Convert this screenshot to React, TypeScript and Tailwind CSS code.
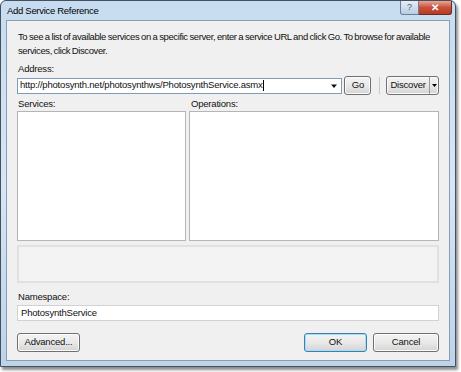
const font = { fontFamily: '"Liberation Sans", Arial, sans-serif' };

const Btn = ({ label, className = "", primary = false }: { label: string; className?: string; primary?: boolean }) => (
  <div
    className={`h-[19px] flex items-center justify-center rounded-[3px] border text-[9.5px] text-[#111] bg-gradient-to-b from-[#f4f4f4] via-[#e9e9e9] to-[#d4d4d4] ${
      primary ? "border-[#3c7fb1] shadow-[inset_0_0_0_1px_#a6dcf5]" : "border-[#707070] shadow-[inset_0_0_0_1px_#fbfbfb]"
    } ${className}`}
  >
    {label}
  </div>
);

const Caret = () => (
  <svg width="6" height="4" viewBox="0 0 6 4">
    <path d="M0 0.5h6L3 4z" fill="#111" />
  </svg>
);

export default function App() {
  return (
    <div className="w-[461px] h-[372px] bg-white overflow-hidden" style={font}>
      <div className="w-[456px] h-[367px] rounded-t-[6px] border border-[#44505e] bg-gradient-to-b from-[#c7dcf0] via-[#d6e6f5] to-[#bcd3ea] shadow-[2px_3px_3px_rgba(0,0,0,0.45)] flex flex-col">
        {/* Title bar */}
        <div className="h-[19px] flex items-start justify-between pl-[6px] pr-[3px]">
          <span className="text-[9.5px] tracking-[-0.3px] text-black mt-[3px] leading-[14px]">Add Service Reference</span>
          <div className="flex">
            <div className="w-[19px] h-[14px] rounded-bl-[3px] border border-[#6d7f94] border-t-0 bg-gradient-to-b from-[#e3edf8] to-[#b9cde3] flex items-center justify-center text-[9px] text-[#555] leading-none">
              ?
            </div>
            <div className="w-[33px] h-[14px] rounded-br-[3px] border border-[#6b2a22] border-t-0 border-l-0 bg-gradient-to-b from-[#e8a595] via-[#c8503a] to-[#b83a22] flex items-center justify-center text-[10px] font-bold text-white leading-none">
              ✕
            </div>
          </div>
        </div>

        {/* Client area */}
        <div className="mx-[5px] mb-[5px] flex-1 border border-[#8a9db3] bg-[#f0f0f0] px-[10px] pt-[9px] flex flex-col text-[9.5px] tracking-[-0.2px] text-[#111]">
          <p className="leading-[14px] pl-px tracking-[-0.4px] [word-spacing:-0.5px]">
            To see a list of available services on a specific server, enter a service URL and click Go. To browse for available services, click Discover.
          </p>

          <div className="mt-[4px] leading-[14px] pl-px">Address:</div>
          <div className="flex items-center">
            <div className="w-[327px] h-[16px] border border-[#7f9db9] bg-white flex items-center pl-[2px] pr-[4px] justify-between">
              <span className="leading-none">
                http://photosynth.net/photosynthws/PhotosynthService.asmx<span className="inline-block w-px h-[11px] bg-black align-middle" />
              </span>
              <Caret />
            </div>
            <Btn label="Go" className="w-[27px] ml-[2px]" />
            <div className="w-px h-[17px] bg-[#c9c9c9] ml-[8px] mr-[6px]" />
            <div className="h-[19px] w-[53px] flex rounded-[3px] border border-[#707070] bg-gradient-to-b from-[#f4f4f4] via-[#e9e9e9] to-[#d4d4d4] shadow-[inset_0_0_0_1px_#fbfbfb]">
              <div className="flex-1 flex items-center justify-center">Discover</div>
              <div className="w-[9px] border-l border-[#9a9a9a] flex items-center justify-center">
                <svg width="5" height="3" viewBox="0 0 5 3">
                  <path d="M0 0h5L2.5 3z" fill="#000" />
                </svg>
              </div>
            </div>
          </div>

          <div className="mt-[2px] flex gap-[3px]">
            <div className="w-[169px] flex flex-col">
              <div className="leading-[14px] pl-px">Services:</div>
              <div className="h-[130px] border border-[#b5b5b5] bg-white" />
            </div>
            <div className="flex-1 flex flex-col">
              <div className="leading-[14px] pl-[2px]">Operations:</div>
              <div className="h-[130px] border border-[#b5b5b5] bg-white" />
            </div>
          </div>

          <div className="mt-[4px] h-[38px] border-2 border-[#e1e1e1] bg-[#f3f3f3]" />

          <div className="mt-[7px] leading-[14px] pl-px">Namespace:</div>
          <div className="mt-[1px] h-[16px] border border-[#d2d2d2] bg-white flex items-center pl-[3px]">PhotosynthService</div>

          <div className="mt-[12px] flex items-center">
            <Btn label="Advanced..." className="w-[63px]" />
            <div className="flex-1" />
            <Btn label="OK" primary className="w-[63px]" />
            <Btn label="Cancel" className="w-[66px] ml-[6px]" />
          </div>
        </div>
      </div>
    </div>
  );
}
